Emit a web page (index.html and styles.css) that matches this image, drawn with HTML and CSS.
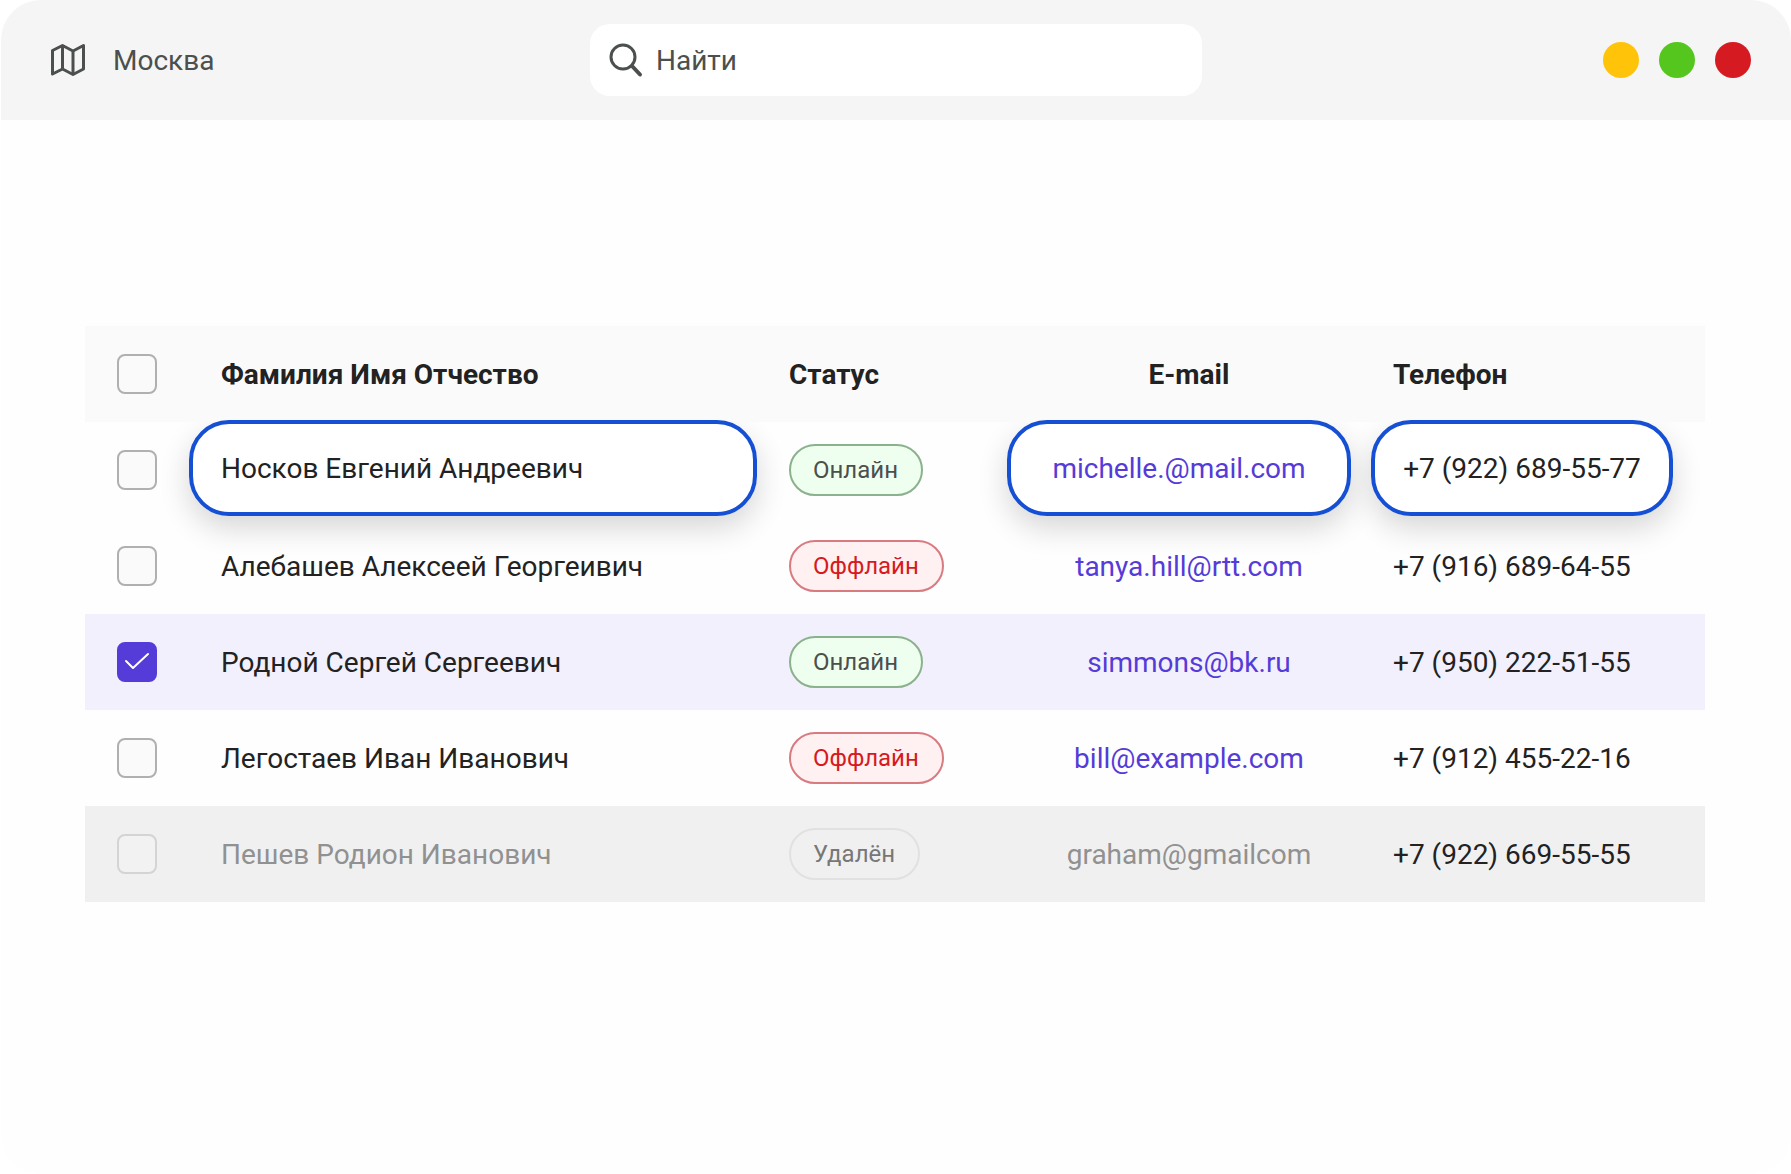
FILE: index.html
```html
<!DOCTYPE html>
<html lang="ru">
<head>
<meta charset="utf-8">
<meta name="viewport" content="width=device-width, initial-scale=1">
<title>Сотрудники</title>
<link rel="stylesheet" href="styles.css">
</head>
<body>
<div class="window">
  <header class="topbar">
    <div class="location">
      <svg class="icon-map" viewBox="0 0 36 34" width="36" height="34" fill="none" stroke="currentColor" stroke-width="3" stroke-linejoin="round" aria-hidden="true">
        <path d="M2.5 7.5 12.5 2.5 23 8 33.500 2.500V26L23 31.500 12.500 26 2.500 31Z"/>
        <path d="M12.500 2.500V26M23 8V31.500"/>
      </svg>
      <span>Москва</span>
    </div>
    <label class="search">
      <svg viewBox="0 0 36 36" width="36" height="36" fill="none" stroke="currentColor" stroke-linecap="round" aria-hidden="true">
        <circle cx="15" cy="15" r="12" stroke-width="3"/>
        <path d="M24 24 32 32.500" stroke-width="4"/>
      </svg>
      <input class="search-input" type="text" placeholder="Найти" aria-label="Найти">
    </label>
    <div class="controls">
      <button class="dot dot-yellow" type="button" aria-label="Свернуть"></button>
      <button class="dot dot-green" type="button" aria-label="Развернуть"></button>
      <button class="dot dot-red" type="button" aria-label="Закрыть"></button>
    </div>
  </header>
  <main class="content">
    <table class="people">
      <colgroup>
        <col class="col-check"><col class="col-name"><col class="col-status"><col class="col-email"><col class="col-phone">
      </colgroup>
      <thead>
        <tr>
          <th class="cell-check"><input class="check" type="checkbox" aria-label="Выбрать всех"></th>
          <th scope="col">Фамилия Имя Отчество</th>
          <th scope="col">Статус</th>
          <th class="cell-email" scope="col">E-mail</th>
          <th class="cell-phone" scope="col">Телефон</th>
        </tr>
      </thead>
      <tbody>
        <tr>
          <td class="cell-check"><input class="check" type="checkbox" aria-label="Носков Евгений Андреевич"></td>
          <td class="cell-card"><div class="card card-name">Носков Евгений Андреевич</div></td>
          <td class="cell-status"><span class="badge badge-online">Онлайн</span></td>
          <td class="cell-card"><div class="card card-email"><a href="mailto:michelle.@mail.com">michelle.@mail.com</a></div></td>
          <td class="cell-card"><div class="card card-phone">+7 (922) 689-55-77</div></td>
        </tr>
        <tr>
          <td class="cell-check"><input class="check" type="checkbox" aria-label="Алебашев Алексеей Георгеивич"></td>
          <td>Алебашев Алексеей Георгеивич</td>
          <td class="cell-status"><span class="badge badge-offline">Оффлайн</span></td>
          <td class="cell-email"><a href="mailto:tanya.hill@rtt.com">tanya.hill@rtt.com</a></td>
          <td class="cell-phone">+7 (916) 689-64-55</td>
        </tr>
        <tr class="row-selected">
          <td class="cell-check"><input class="check" type="checkbox" checked aria-label="Родной Сергей Сергеевич"></td>
          <td>Родной Сергей Сергеевич</td>
          <td class="cell-status"><span class="badge badge-online">Онлайн</span></td>
          <td class="cell-email"><a href="mailto:simmons@bk.ru">simmons@bk.ru</a></td>
          <td class="cell-phone">+7 (950) 222-51-55</td>
        </tr>
        <tr>
          <td class="cell-check"><input class="check" type="checkbox" aria-label="Легостаев Иван Иванович"></td>
          <td>Легостаев Иван Иванович</td>
          <td class="cell-status"><span class="badge badge-offline">Оффлайн</span></td>
          <td class="cell-email"><a href="mailto:bill@example.com">bill@example.com</a></td>
          <td class="cell-phone">+7 (912) 455-22-16</td>
        </tr>
        <tr class="row-deleted">
          <td class="cell-check"><input class="check" type="checkbox" disabled aria-label="Пешев Родион Иванович"></td>
          <td class="muted">Пешев Родион Иванович</td>
          <td class="cell-status"><span class="badge badge-deleted">Удалён</span></td>
          <td class="cell-email muted">graham@gmailcom</td>
          <td class="cell-phone">+7 (922) 669-55-55</td>
        </tr>
      </tbody>
    </table>
  </main>
</div>
</body>
</html>
```
FILE: styles.css
```css
* {
  box-sizing: border-box;
}

body {
  margin: 0;
  background: #fff;
  color: #222;
  font-family: Roboto, "Liberation Sans", sans-serif;
  font-size: 28px;
  line-height: 34px;
}

.window {
  min-height: 100vh;
  margin-left: 1px;
  border-radius: 40px;
  overflow: hidden;
  background: #fefefe;
}

.topbar {
  display: grid;
  grid-template-columns: 1fr 612px 1fr;
  align-items: center;
  height: 120px;
  padding: 0 40px;
  background: #f5f5f5;
  color: #4b4f4d;
}

.location {
  display: flex;
  align-items: center;
  gap: 27px;
  padding-left: 9px;
}

.location span,
.search-input {
  padding: 2px 0 0;
}

.search {
  display: flex;
  align-items: center;
  gap: 12px;
  height: 72px;
  padding: 0 18px;
  border-radius: 20px;
  background: #fff;
}

.search-input {
  flex: 1;
  min-width: 0;
  border: 0;
  outline: 0;
  background: none;
  color: inherit;
  font: inherit;
}

.search-input::placeholder {
  color: inherit;
  opacity: 1;
}

.controls {
  display: flex;
  justify-content: flex-end;
  gap: 20px;
}

.dot {
  width: 36px;
  height: 36px;
  padding: 0;
  border: 0;
  border-radius: 50%;
}

.dot-yellow { background: #ffc409; }
.dot-green { background: #55c61d; }
.dot-red { background: #d61a22; }

.content {
  padding: 206px 86px 0 84px;
}

.people {
  width: 100%;
  border-collapse: collapse;
  table-layout: fixed;
  isolation: isolate;
}

.col-check { width: 104px; }
.col-status { width: 250px; }
.col-email { width: 364px; }
.col-phone { width: 334px; }

.people th,
.people td {
  height: 96px;
  padding: 2px 0 0 32px;
  text-align: left;
  vertical-align: middle;
}

.people th {
  background: #fafafa;
  font-weight: 700;
}

.people .cell-check,
.people .cell-status {
  padding-top: 0;
}

.people .cell-email {
  padding-left: 0;
  text-align: center;
}

.people .cell-phone {
  padding-left: 22px;
}

.people .cell-card {
  padding: 0;
  vertical-align: top;
}

.row-selected { background: #f2f0fc; }
.row-deleted { background: #f0f0f0; }

.muted { color: #919191; }

a {
  color: #553bd8;
  text-decoration: none;
}

.card {
  position: relative;
  display: flex;
  align-items: center;
  justify-content: center;
  height: 96px;
  margin-top: -2px;
  padding-top: 2px;
  border: 4px solid #154fd4;
  border-radius: 40px;
  background: #fff;
}

/* The shadow sits behind every card so neighbours stay clean. */
.card::before {
  content: "";
  position: absolute;
  inset: -4px;
  z-index: -1;
  border-radius: inherit;
  box-shadow: 0 12px 30px rgba(0, 0, 0, 0.16);
}

.card-name {
  justify-content: flex-start;
  padding-left: 28px;
}

.card-email { margin-right: 20px; }
.card-phone { margin-right: 32px; }

.check {
  appearance: none;
  display: block;
  width: 40px;
  height: 40px;
  margin: 0;
  border: 2px solid #b0b0b3;
  border-radius: 8px;
  background: #fafafa;
}

.check:checked {
  border-color: #553bd8;
  background: #553bd8 url("data:image/svg+xml,%3Csvg xmlns='http://www.w3.org/2000/svg' viewBox='0 0 36 36' fill='none' stroke='white' stroke-width='2' stroke-linecap='round' stroke-linejoin='round'%3E%3Cpath d='M7 17l7 7L29 10'/%3E%3C/svg%3E") center / 36px 36px no-repeat;
}

.check:disabled {
  border-color: #d4d4d6;
  background: #f2f2f2;
}

.badge {
  display: inline-block;
  height: 52px;
  padding: 0 23px 0 22px;
  border: 2px solid;
  border-radius: 26px;
  font-size: 24px;
  line-height: 48px;
  vertical-align: middle;
}

.badge-online {
  border-color: #8bb18d;
  background: #eefff0;
  color: #4b4f4d;
}

.badge-offline {
  border-color: #d97a80;
  background: #fff1f2;
  color: #d61a22;
}

.badge-deleted {
  border-color: #e1e1e1;
  color: #777;
}
```
